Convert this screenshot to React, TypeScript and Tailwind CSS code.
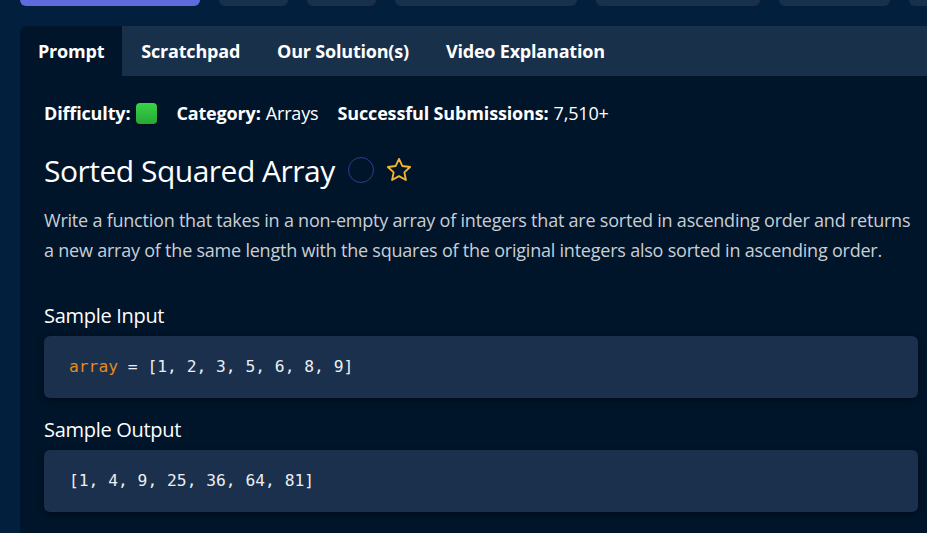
import React from "react";

const tabs = ["Prompt", "Scratchpad", "Our Solution(s)", "Video Explanation"];
const topButtons = [
  "w-[180px] bg-[#5f6bdc]",
  "w-[69px] bg-[#19304b]",
  "w-[69px] bg-[#19304b]",
  "w-[182px] bg-[#19304b]",
  "w-[164px] bg-[#19304b]",
  "w-[111px] bg-[#19304b]",
  "w-[60px] bg-[#19304b]",
];

function CodeBox({ children }: { children: React.ReactNode }) {
  return (
    <div className="h-[62px] rounded-md bg-[#1a304d] shadow-[0_2px_6px_rgba(0,0,0,0.45)] flex items-center px-[25px] font-['DejaVu_Sans_Mono',monospace] text-[16.3px] text-[#eceef2]">
      {children}
    </div>
  );
}

export default function App() {
  return (
    <div className="w-[927px] h-[533px] overflow-hidden bg-[#02203e] font-['Open_Sans',sans-serif]">
      <div className="flex gap-[19px] pl-[20px] -mt-[4px]">
        {topButtons.map((c, i) => (
          <div key={i} className={`h-[10px] shrink-0 rounded-b-md ${c}`} />
        ))}
      </div>

      <div className="ml-[20px] mt-[20px] w-[922px] h-[520px] bg-[#01152a] rounded-t-md overflow-hidden">
        <div className="flex h-[50px] bg-[#19304b]">
          {tabs.map((t, i) => (
            <div
              key={t}
              className={`px-[18px] flex items-center text-[18px] font-bold tracking-[-0.2px] text-white ${
                i === 0 ? "bg-[#01152a]" : ""
              } ${i > 0 ? "ml-[1px]" : ""}`}
            >
              {t}
            </div>
          ))}
        </div>

        <div className="px-[24px] pt-[24px]">
          <div className="flex items-center h-[26px] text-[18px] text-white tracking-[-0.15px]">
            <span className="font-bold">Difficulty:</span>
            <span className="ml-[6px] w-[21px] h-[21px] rounded-[4px] bg-gradient-to-b from-[#39d24a] to-[#26a934] shadow-[0_1px_3px_rgba(0,0,0,0.5)]" />
            <span className="ml-[19px] font-bold">Category:</span>
            <span className="ml-[5px]">Arrays</span>
            <span className="ml-[19px] font-bold">Successful Submissions:</span>
            <span className="ml-[5px]">7,510+</span>
          </div>

          <div className="flex items-center mt-[24px] h-[40px]">
            <h1 className="text-[30px] text-white tracking-[-0.5px]">Sorted Squared Array</h1>
            <span className="ml-[13px] w-[26px] h-[26px] rounded-full border border-[#2c3b94]" />
            <svg className="ml-[11px]" width="28" height="28" viewBox="0 0 24 24" fill="none" stroke="#f3b530" strokeWidth="1.6" strokeLinejoin="round">
              <path d="M12 2.5l2.9 6.1 6.6.8-4.9 4.6 1.3 6.6L12 17.3l-5.9 3.3 1.3-6.6-4.9-4.6 6.6-.8z" />
            </svg>
          </div>

          <p className="mt-[15px] text-[18px] leading-[30px] text-[#c9ced6] tracking-[-0.22px]">
            Write a function that takes in a non-empty array of integers that are sorted in ascending order and returns a new array of the same length with the squares of the original integers also sorted in ascending order.
          </p>

          <h2 className="mt-[36px] text-[20px] text-white font-medium tracking-[-0.3px]">Sample Input</h2>
          <div className="mt-[5px]">
            <CodeBox>
              <span className="text-[#e68a1f]">array</span>
              <span>&nbsp;=&nbsp;[1, 2, 3, 5, 6, 8, 9]</span>
            </CodeBox>
          </div>

          <h2 className="mt-[17px] text-[20px] text-white font-medium tracking-[-0.3px]">Sample Output</h2>
          <div className="mt-[5px]">
            <CodeBox>[1, 4, 9, 25, 36, 64, 81]</CodeBox>
          </div>
        </div>
      </div>
    </div>
  );
}
